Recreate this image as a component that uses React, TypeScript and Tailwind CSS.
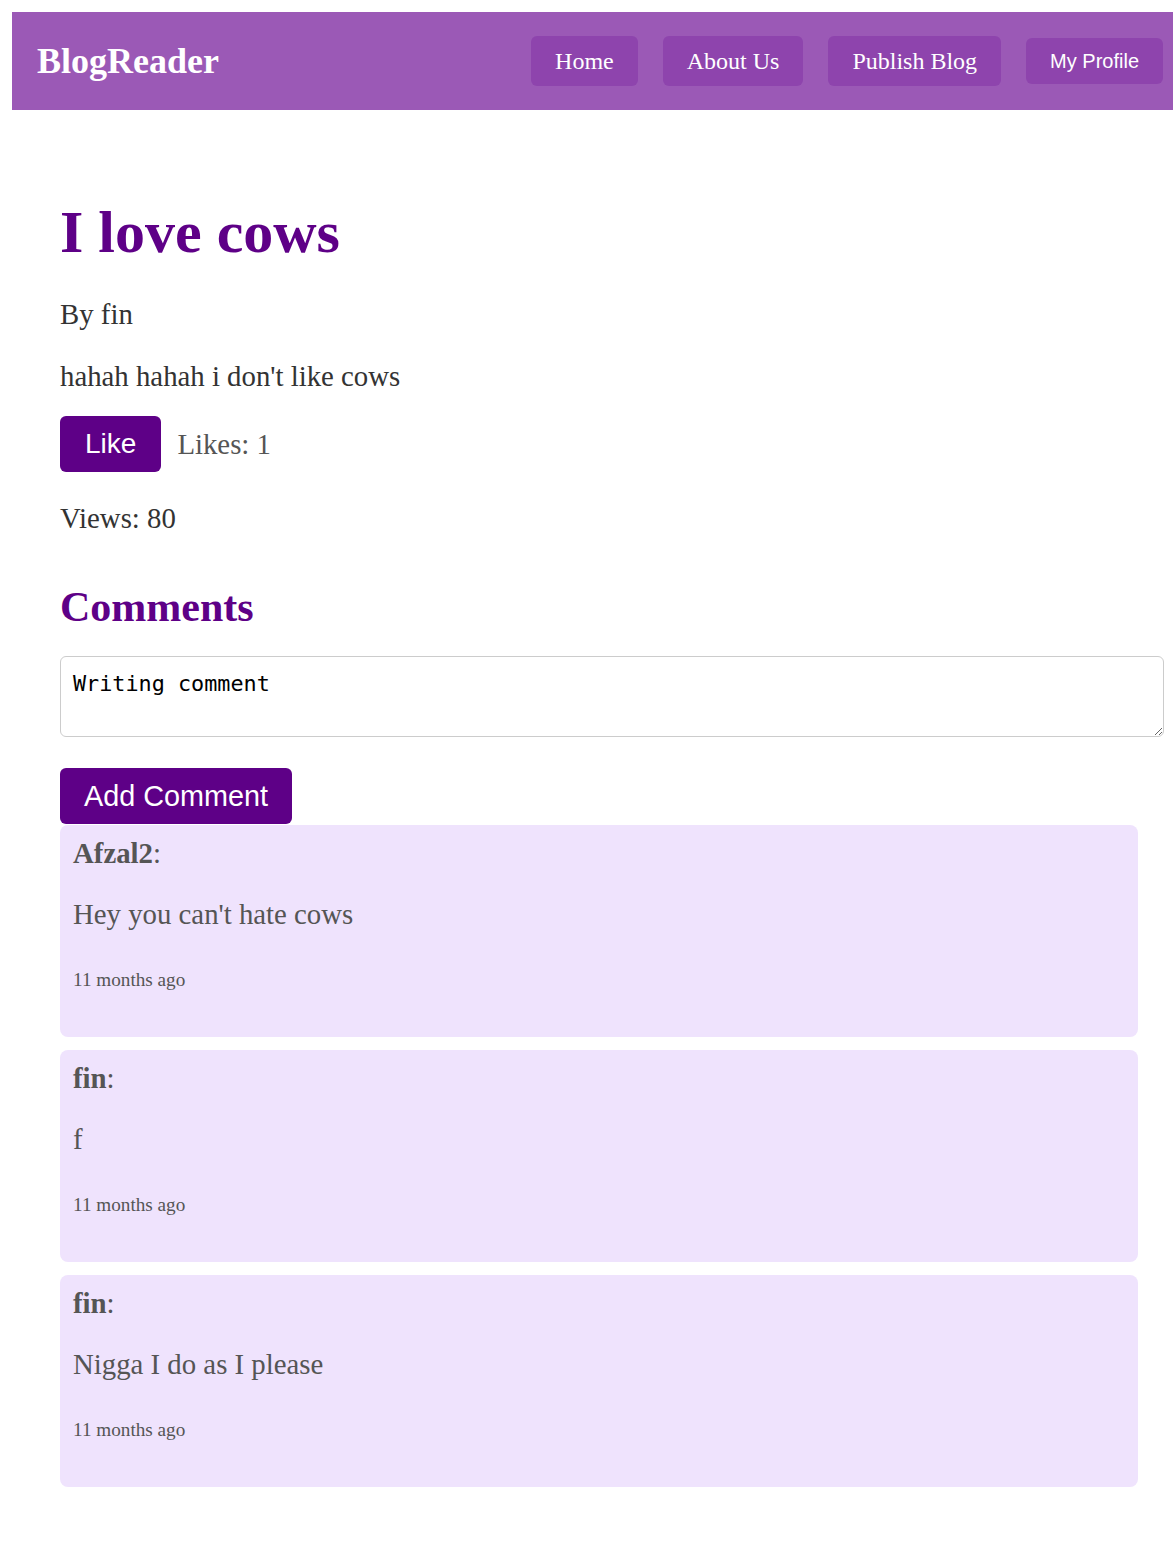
import { useState } from 'react';

type Comment = {
  id: number;
  author: string;
  text: string;
  ago: string;
};

const serif = "font-['Liberation_Serif','Times_New_Roman',serif]";
const sans = "font-['Liberation_Sans',Arial,sans-serif]";

const comments: Comment[] = [
  { id: 1, author: 'Afzal2', text: "Hey you can't hate cows", ago: '11 months ago' },
  { id: 2, author: 'fin', text: 'f', ago: '11 months ago' },
  { id: 3, author: 'fin', text: 'Nigga I do as I please', ago: '11 months ago' },
];

function NavBar() {
  const links = ['Home', 'About Us', 'Publish Blog'];
  return (
    <header className="ml-[12px] mt-[12px] w-[1161px] h-[98px] bg-[#9b59b6] flex items-center justify-between pl-[25px] pr-[10px]">
      <div className={`${serif} text-[36px] font-bold text-white leading-[normal]`}>BlogReader</div>
      <nav className="flex items-center gap-[25px]">
        {links.map((l) => (
          <a
            key={l}
            href="#"
            className={`${serif} h-[50px] flex items-center px-6 rounded-[6px] bg-[#8e44ad] text-white text-[24px] leading-[normal]`}
          >
            {l}
          </a>
        ))}
        <button className={`${sans} h-[46px] px-6 rounded-[6px] bg-[#8e44ad] text-white text-[20px] leading-[normal]`}>
          My Profile
        </button>
      </nav>
    </header>
  );
}

function CommentCard({ c }: { c: Comment }) {
  return (
    <div className={`${serif} bg-[#efe3fd] rounded-[8px] px-[13px] pt-[12px] pb-[16px] text-[#555] text-[28.8px] leading-[normal]`}>
      <p>
        <strong>{c.author}</strong>:
      </p>
      <p className="mt-[28px]">{c.text}</p>
      <p className="mt-[29px] mb-[28px]">
        <small className="text-[19.2px]">{c.ago}</small>
      </p>
    </div>
  );
}

export default function App() {
  const [likes, setLikes] = useState(1);
  const [draft, setDraft] = useState('Writing comment');

  return (
    <div className="bg-white min-h-[1560px] w-[1173px] overflow-hidden">
      <NavBar />

      <main className={`${serif} pl-[60px] w-[1138px] pb-[40px]`}>
        <h1 className="mt-[88px] text-[60px] font-bold text-[#5e0087] leading-[normal]">I love cows</h1>
        <p className="mt-[31px] text-[28.8px] text-[#333] leading-[normal]">By fin</p>
        <p className="mt-[29px] text-[28.8px] text-[#333] leading-[normal]">hahah hahah i don't like cows</p>

        <div className="mt-[23px] flex items-center gap-4">
          <button
            onClick={() => setLikes(likes + 1)}
            className={`${sans} h-[56px] px-[25px] rounded-[6px] bg-[#5e0087] text-white text-[28px] leading-[normal]`}
          >
            Like
          </button>
          <span className="text-[28.8px] text-[#555] leading-[normal]">Likes: {likes}</span>
        </div>

        <p className="mt-[30px] text-[28.8px] text-[#333] leading-[normal]">Views: 80</p>

        <h2 className="mt-[48px] text-[42px] font-bold text-[#5e0087] leading-[normal]">Comments</h2>

        <textarea
          value={draft}
          onChange={(e) => setDraft(e.target.value)}
          className="mt-[25px] block w-[1104px] h-[81px] border border-[#ccc] rounded-[6px] px-[12px] pt-[14px] pb-[8px] font-['DejaVu_Sans_Mono',monospace] text-[21.8px] leading-[normal] text-black outline-none"
        />

        <button
          className={`${sans} mt-[31px] block h-[56px] px-6 rounded-[6px] bg-[#5e0087] text-white text-[28.8px] leading-[normal]`}
        >
          Add Comment
        </button>

        <div className="mt-[1px] flex flex-col gap-[13px]">
          {comments.map((c) => (
            <CommentCard key={c.id} c={c} />
          ))}
        </div>
      </main>
    </div>
  );
}
